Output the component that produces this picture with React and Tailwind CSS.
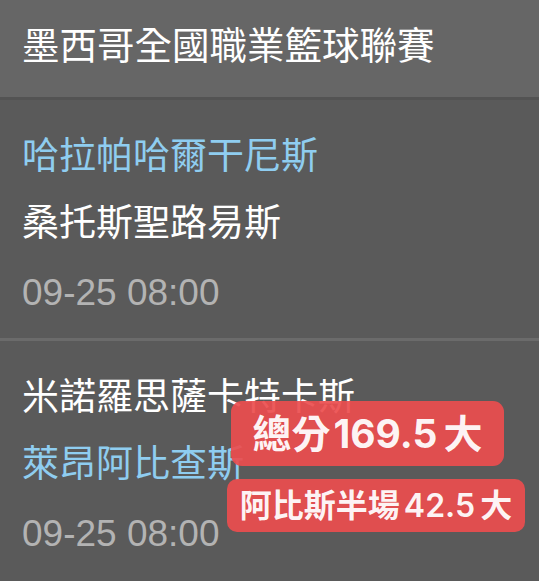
import React from "react";

const games = [
  { home: "哈拉帕哈爾干尼斯", away: "桑托斯聖路易斯", homeFirst: true, time: "09-25 08:00" },
  { home: "米諾羅思薩卡特卡斯", away: "萊昂阿比查斯", homeFirst: false, time: "09-25 08:00" },
];

const GameRow = ({ game, children }) => {
  const blue = "text-[#8fcdf0]";
  const white = "text-white";
  return (
    <div className="relative px-[22px] pt-[23px] pb-[12px] text-[37px] leading-[67px]">
      <div className={game.homeFirst ? blue : white}>{game.home}</div>
      <div className={game.homeFirst ? white : blue}>{game.away}</div>
      <div className="mt-[2px] text-[#b3b3b3]">{game.time}</div>
      {children}
    </div>
  );
};

export default function App() {
  return (
    <div
      className="w-[539px] h-[581px] overflow-hidden bg-[#5a5a5a]"
      style={{ fontFamily: '"Liberation Sans", "Noto Sans CJK TC", sans-serif' }}
    >
      {/* League header */}
      <div className="h-[97px] bg-[#666666] border-b-[3px] border-[#535353] box-content flex items-center px-[22px]">
        <span className="text-white text-[37.5px] leading-none -mt-[4px]">墨西哥全國職業籃球聯賽</span>
      </div>

      <GameRow game={games[0]} />
      <div className="h-[3px] bg-[#6b6b6b]" />
      <GameRow game={games[1]}>
        {/* Tip badges */}
        <div
          className="absolute left-[231px] top-[60px] w-[273px] h-[65px] rounded-[11px] bg-[#ec4d4e]/[0.92] flex items-center justify-center text-white/95 text-[39px] font-bold leading-none"
          style={{ fontFamily: 'Inter, "Noto Sans CJK TC", sans-serif' }}
        >
          總分<span className="ml-[3px] mr-[6px]">169.5</span>大
        </div>
        <div
          className="absolute left-[227px] top-[138px] w-[298px] h-[53px] rounded-[10px] bg-[#ec4d4e]/[0.92] flex items-center justify-center text-white/95 text-[32px] font-semibold leading-none"
          style={{ fontFamily: 'Inter, "Noto Sans CJK TC", sans-serif' }}
        >
          阿比斯半場<span className="ml-[4px] mr-[5px]">42.5</span>大
        </div>
      </GameRow>
    </div>
  );
}
